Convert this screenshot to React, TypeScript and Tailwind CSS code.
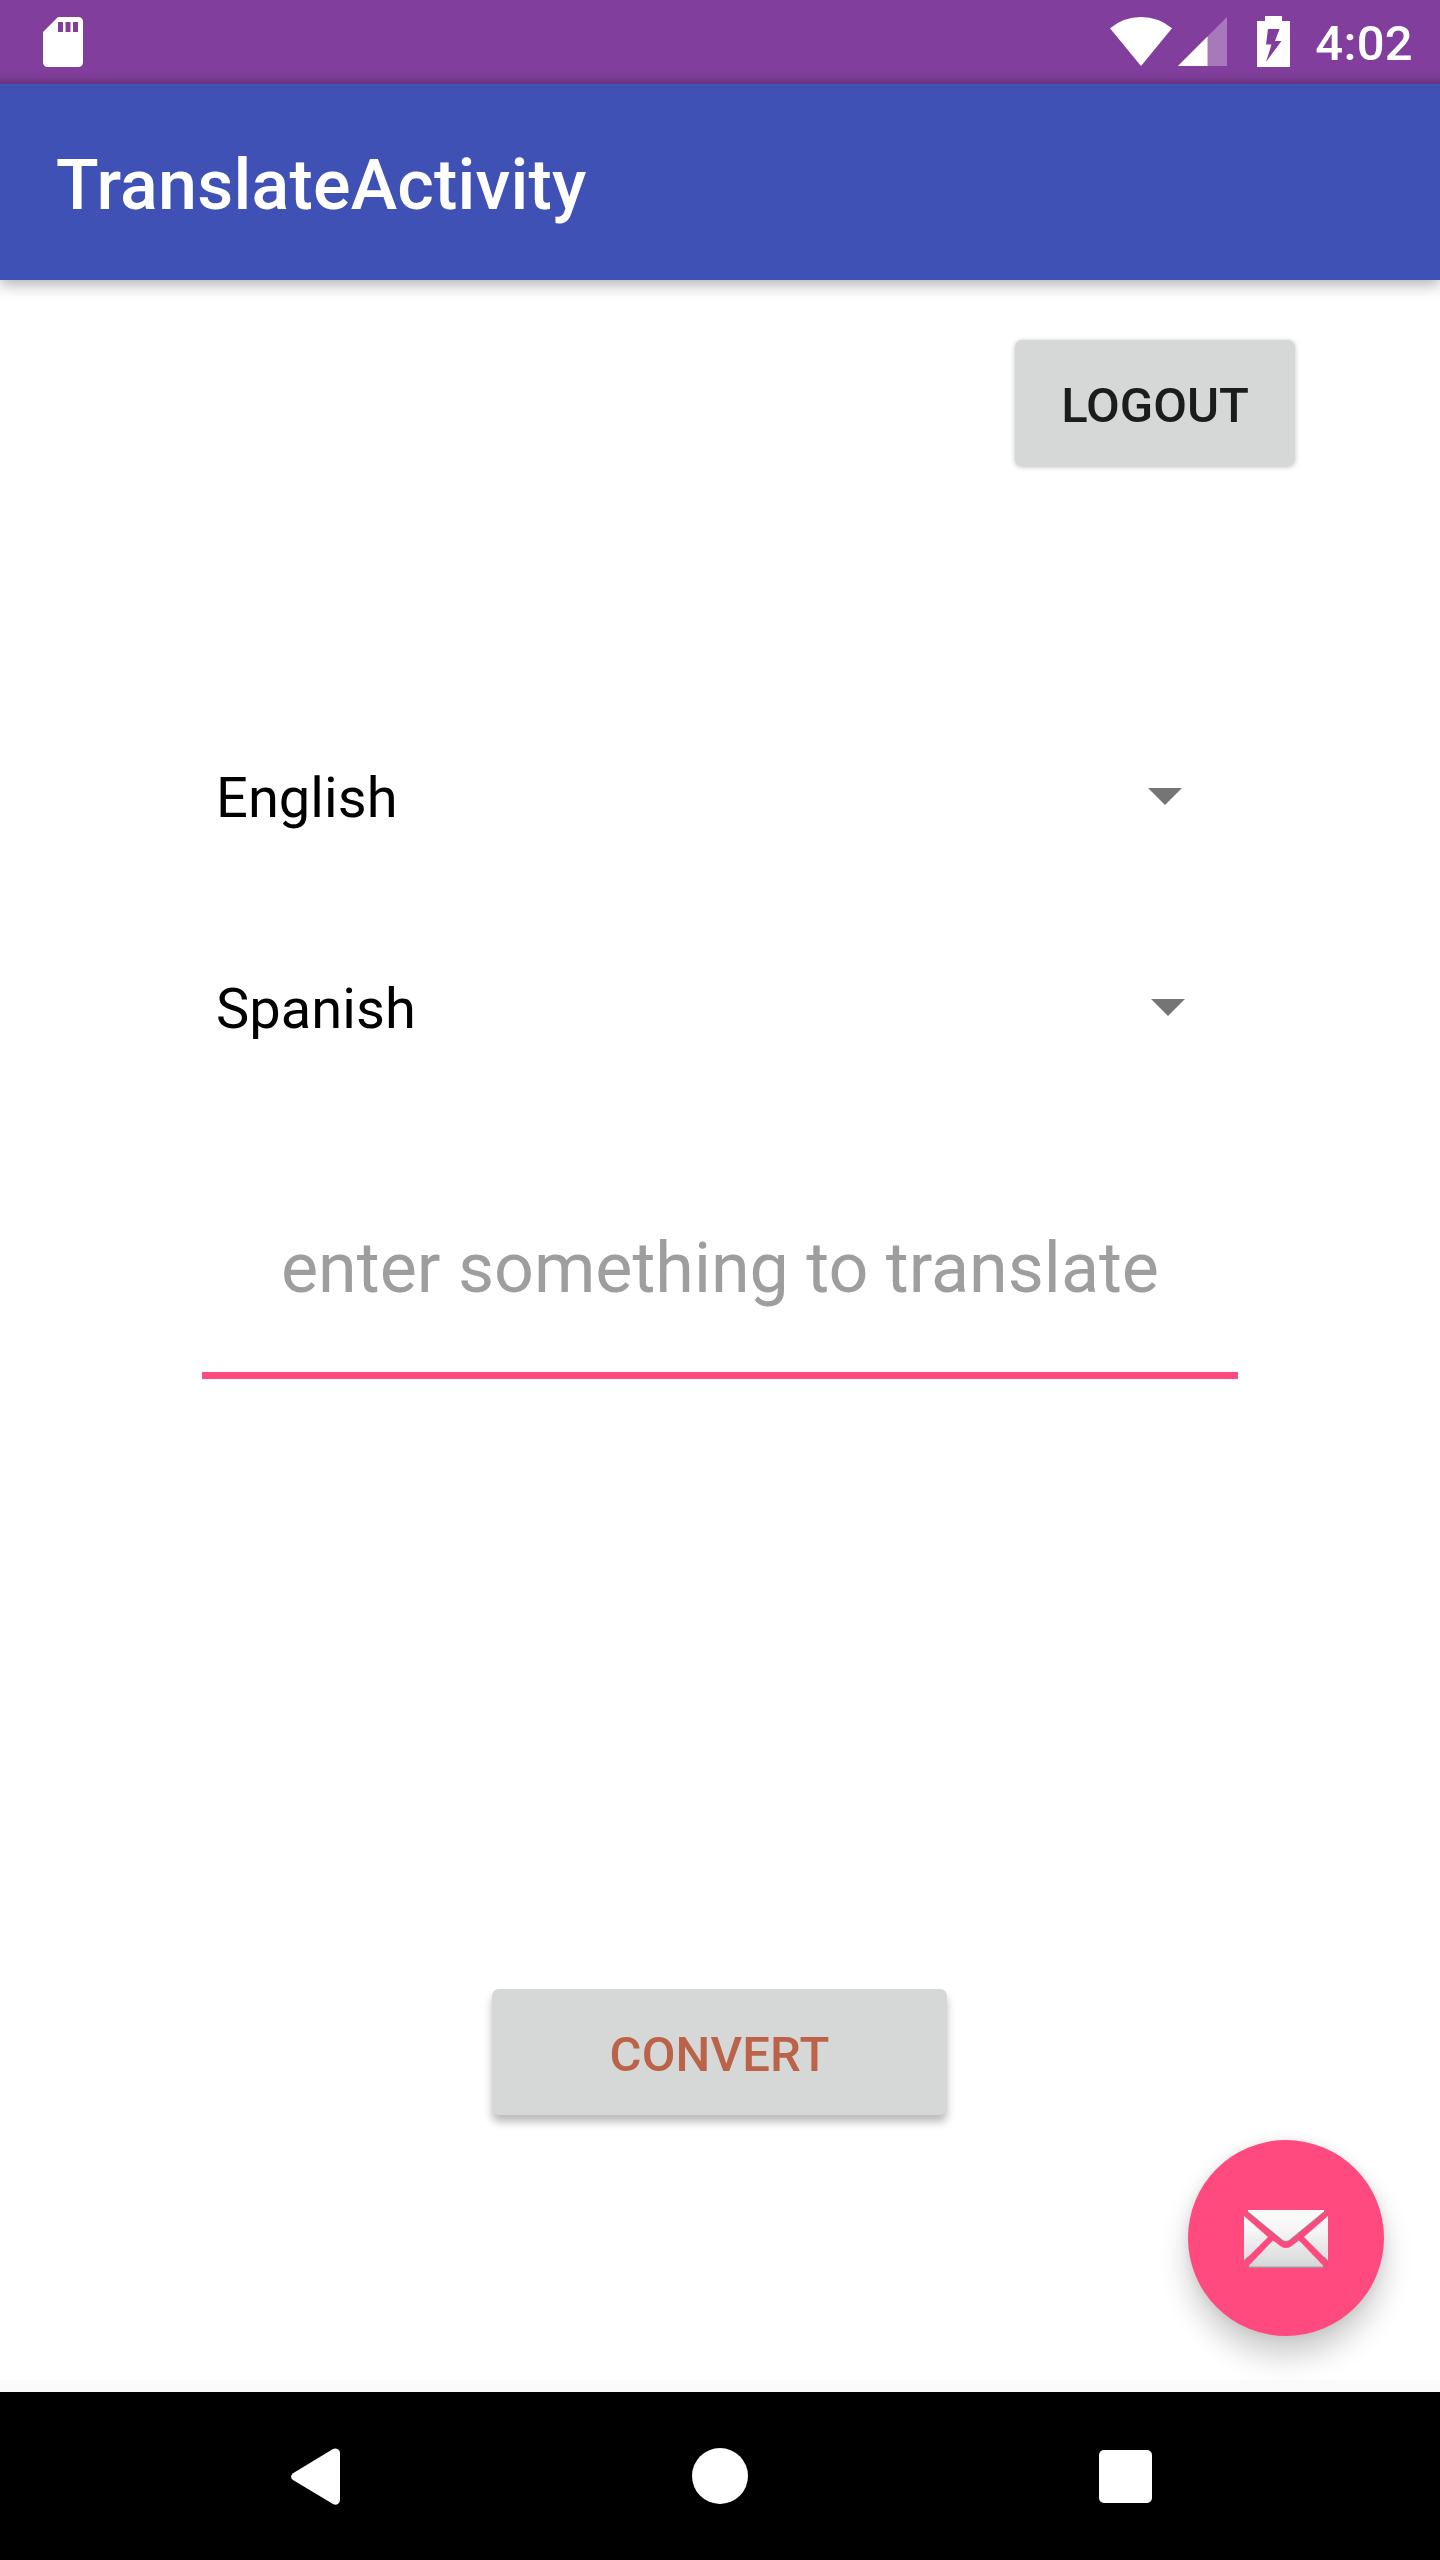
import type { ReactNode } from "react";

function StatusBar() {
  return (
    <div className="flex h-[84px] items-start bg-[#813e9d] bg-[linear-gradient(to_top,rgba(0,0,0,0.2),rgba(0,0,0,0.06)_6px,transparent_14px)] pl-[43px] pr-[27px]">
      <svg className="mt-[17px] h-[50px] w-10" viewBox="0 0 40 50" fill="white">
        <path
          fillRule="evenodd"
          d="M15 0H35.5A4.5 4.5 0 0 1 40 4.500V45.500A4.500 4.500 0 0 1 35.500 50H4.500A4.500 4.500 0 0 1 0 45.500V15ZM15 5V15H20V5ZM22.500 5V15H27.500V5ZM30 5V15H35V5Z"
        />
      </svg>
      <svg className="ml-auto mt-[17px] h-[49px] w-[62px]" viewBox="0 0 62 49" fill="white">
        <path d="M0 11.300Q13.500 0 31 0Q48.500 0 62 11.300L31 49Z" />
      </svg>
      <svg className="ml-[6px] mt-[17px] h-[49px] w-[49px]" viewBox="0 0 49 49" fill="white">
        <path d="M49 0V49H0Z" opacity=".3" />
        <path d="M29.500 19.500V49H0Z" />
      </svg>
      <svg className="ml-[30px] mt-4 h-[51px] w-[33px]" viewBox="0 0 33 51" fill="white">
        <path
          fillRule="evenodd"
          d="M8 0H25V5H33V51H0V5H8ZM11 13L9 28.500H14.500L9 46L24.500 25H18L22.500 13Z"
        />
      </svg>
      <span className="ml-[25px] mt-[15px] whitespace-nowrap text-[49px] font-medium leading-[57px] tracking-[0.3px] text-white">4:02</span>
    </div>
  );
}

function Spinner({ label, width }: { label: string; width: string }) {
  return (
    <div className={`flex h-[84px] items-center justify-between ${width}`}>
      <span className="text-[56px] leading-[66px] tracking-[0.05px] text-black">{label}</span>
      <svg className="mb-[3px] h-[17px] w-[34px]" viewBox="0 0 34 17" fill="#757575">
        <path d="M0 0H34L17 17Z" />
      </svg>
    </div>
  );
}

function RaisedButton({ className, children }: { className: string; children: ReactNode }) {
  return (
    <button
      className={`flex h-[126px] items-center justify-center rounded-[7px] bg-[#d6d8d7] text-[49px] font-medium leading-[57px] ${className}`}
    >
      {children}
    </button>
  );
}

function Envelope() {
  return (
    <svg className="h-[58px] w-[84px]" viewBox="0 0 84 58">
      <defs>
        <linearGradient id="paper" x1="0" y1="0" x2="0" y2="58" gradientUnits="userSpaceOnUse">
          <stop offset="0" stopColor="#fbfbfb" />
          <stop offset=".35" stopColor="#f6f6f6" />
          <stop offset=".85" stopColor="#dedede" />
          <stop offset="1" stopColor="#d2d2d2" />
        </linearGradient>
      </defs>
      <g fill="url(#paper)">
        <path d="M4 0H80V2L46 30Q42 33 38 30L4 2Z" />
        <path d="M0 6L24 27L0 51Z" />
        <path d="M84 6L60 27L84 51Z" />
        <path d="M29 30.500L37 36.500Q42 39.500 47 36.500L55 30.500L79 55.500V57.500H5V55.500Z" />
      </g>
      <g fill="none" stroke="#777" strokeOpacity=".55" strokeWidth="1.300">
        <path d="M4 2L38 30Q42 33 46 30L80 2" />
        <path d="M5 57.200H79M0 51L4 47M84 51L80 47" />
      </g>
    </svg>
  );
}

function NavBar() {
  return (
    <div className="flex h-[168px] bg-black pl-[291px]">
      <svg className="mt-14 h-[57px] w-[49px]" viewBox="0 0 49 57" fill="white">
        <path d="M2 25.300L42 1Q44.500 -.3 47 1.200Q49 2.500 49 5V52Q49 54.500 47 56Q44.500 57.300 42 56L2 32Q-2 28.700 2 25.300Z" />
      </svg>
      <div className="ml-[351.500px] mt-[55.500px] size-14 rounded-full bg-white" />
      <div className="ml-[351.500px] mt-[58px] h-[53px] w-[53px] rounded-[5px] bg-white" />
    </div>
  );
}

export default function App() {
  return (
    <div className="flex h-[2560px] w-[1440px] flex-col overflow-hidden bg-white font-[Roboto,sans-serif]">
      <StatusBar />
      <header className="relative flex h-[196px] items-center bg-[#3f51b5] px-14 pt-[6px] shadow-[0_5px_14px_rgba(0,0,0,0.3)] [clip-path:inset(0_0_-30px_0)]">
        <h1 className="text-[70px] font-medium leading-[82px] tracking-[0.2px] text-white">TranslateActivity</h1>
      </header>
      <main className="flex h-[2100px] flex-col pt-[60px]">
        <RaisedButton className="ml-[1015px] w-[280px] pt-[4px] text-[#1c1c1c] shadow-[0_1px_5px_rgba(0,0,0,0.25)]">
          LOGOUT
        </RaisedButton>
        <div className="ml-[216px] mt-[290px] flex flex-col gap-[127px]">
          <Spinner label="English" width="w-[966px]" />
          <Spinner label="Spanish" width="w-[969px]" />
        </div>
        <div className="ml-[202px] mt-[176px] flex h-[152px] w-[1036px] justify-center border-b-[7px] border-[#ff4a80]">
          <span className="whitespace-nowrap text-[70px] leading-[82px] text-[#9e9e9e]">enter something to translate</span>
        </div>
        <RaisedButton className="ml-[492px] mt-[610px] w-[455px] pt-[4px] tracking-[0.15px] text-[#bb6349] shadow-[0_7px_8px_rgba(0,0,0,0.27)]">
          CONVERT
        </RaisedButton>
        <button
          aria-label="Send message"
          className="ml-[1188px] mt-[25px] flex size-[196px] items-center justify-center rounded-full bg-[#ff4a80] pt-[2px] shadow-[0_20px_30px_rgba(0,0,0,0.2),0_0_12px_rgba(0,0,0,0.08)]"
        >
          <Envelope />
        </button>
      </main>
      <div className="h-3 bg-[#fafafa]" />
      <NavBar />
    </div>
  );
}
